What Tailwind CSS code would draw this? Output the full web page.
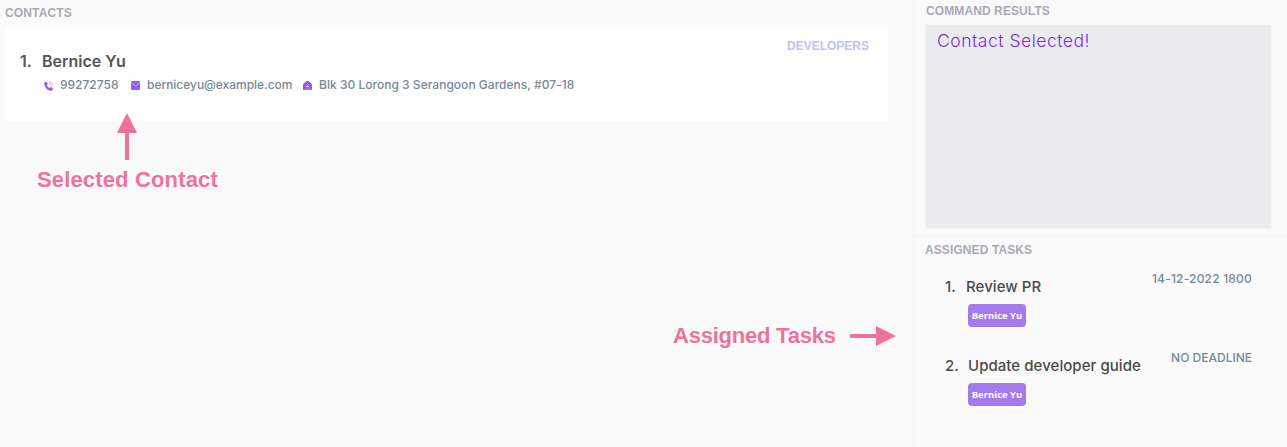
<!DOCTYPE html>
<html lang="en">
<head>
<meta charset="utf-8">
<title>Contacts</title>
<script src="https://cdn.jsdelivr.net/npm/@tailwindcss/browser@4"></script>
</head>
<body class="h-[447px] overflow-hidden bg-[#fafafa] font-['Inter',sans-serif] text-[#4a4a4a]">
<div class="flex h-[447px] w-[1287px]">
  <main class="relative w-[913px] shrink-0 pl-[5px]">
    <h2 class="h-[26px] pt-[5px] font-['Liberation_Sans',sans-serif] text-[12px] leading-4 font-bold tracking-[0.15px] text-[#a9a9b2]">CONTACTS</h2>
    <section class="flex h-[95px] w-[883px] justify-between bg-white pr-[19px] pl-[15px]">
      <div class="pt-[25px]">
        <h3 class="flex text-[16px] leading-5 font-semibold text-[#555]"><span class="w-[22px]">1.</span><span>Bernice Yu</span></h3>
        <div class="mt-[6px] flex h-4 items-center pl-[23px] text-[12px] leading-4 font-medium whitespace-nowrap text-[#778899]">
          <svg class="mt-px mr-[6px] ml-px size-[10px]" viewBox="0 0 10 10" fill="#945df2"><path d="M.5 1h2.300l1 2-1 1.200c.5 1.200 1.500 2.200 2.700 2.800L6.600 6l2.200 1v2L7.500 9.800C3.500 9.800.3 6 .2 2z"/><path d="M5 .8c2.300 0 4 1.800 4 4.200M5 2.700c1.300 0 2.200.9 2.200 2.300" fill="none" stroke="#b18bf6" stroke-width=".8" stroke-dasharray="1.500 .5"/></svg>
          <span class="w-[71px]">99272758</span>
          <svg class="mt-px mr-[7px] h-[9px] w-[9px]" viewBox="0 0 9 9"><rect width="9" height="9" rx="1.200" fill="#945df2"/><path d="M.3 1.500 4.500 5.200 8.700 1.500" fill="none" stroke="#dccbfb" stroke-width=".8"/></svg>
          <span class="w-[156px] tracking-[-0.03px]">berniceyu@example.com</span>
          <svg class="mr-[7px] h-[9px] w-[9px]" viewBox="0 0 9 9"><path d="M3.500 0h2L8.200 2.300 9 4v5H0V4l.8-1.700z" fill="#945df2"/><path d="M3 5.500h3M4.500 4.200v1.300" stroke="#eadfff" stroke-width=".9"/><path d="M2.500 7.300V9M4.500 7.300V9M6.500 7.300V9" stroke="#b18bf6" stroke-width=".8"/></svg>
          <span class="tracking-[0.02px]">Blk 30 Lorong 3 Serangoon Gardens, #07-18</span>
        </div>
      </div>
      <div class="pt-[12px] font-['Liberation_Sans',sans-serif] text-[12px] leading-4 font-bold text-[#c0c0fd]">DEVELOPERS</div>
    </section>
    <div class="absolute top-[113px] left-[37px] w-[182px] text-[#ef719f]">
      <svg class="ml-[80px] h-[47px] w-5" viewBox="0 0 20 47" fill="currentColor"><path d="M10 0 20 20h-8v27H8V20H0z"/></svg>
      <p class="mt-[6px] font-['Liberation_Sans',sans-serif] text-[22px] leading-7 font-bold tracking-[0.15px] whitespace-nowrap">Selected Contact</p>
    </div>
    <div class="absolute top-[322px] left-[673px] flex items-center text-[#ef719f]">
      <p class="w-[177px] font-['Liberation_Sans',sans-serif] text-[22px] leading-7 font-bold tracking-[-0.23px] whitespace-nowrap">Assigned Tasks</p>
      <svg class="h-5 w-[46px]" viewBox="0 0 46 20" fill="currentColor"><path d="M46 10 26 20v-8H0V8h26V0z"/></svg>
    </div>
  </main>
  <aside class="w-[374px] border-l border-[#f4f4f5]">
    <section class="h-[236px] border-b border-[#f4f4f5] pl-[11px]">
      <h2 class="h-[24px] pt-[3px] pl-px font-['Liberation_Sans',sans-serif] text-[12px] leading-4 font-bold tracking-[0.1px] text-[#a9a9b2]">COMMAND RESULTS</h2>
      <div class="h-[205px] w-[347px] border border-[#f4f4f6] bg-[#ebebed] pt-[6px] pl-[11px] text-[17.500px] leading-5 font-light tracking-[0.52px] text-[#7a2be8]">Contact Selected!</div>
    </section>
    <section class="pr-[35px] pl-[11px]">
      <h2 class="h-[36px] pt-[6px] font-['Liberation_Sans',sans-serif] text-[12px] leading-4 font-bold tracking-[0.1px] text-[#a9a9b2]">ASSIGNED TASKS</h2>
      <article class="flex h-[79px] justify-between pl-[20px]">
        <div class="pt-[5px]"><h3 class="flex text-[15px] leading-5 font-medium"><span class="w-[21px]">1.</span><span class="tracking-[0.05px]">Review PR</span></h3>
          <span class="mt-[7px] ml-[23px] flex h-[23px] w-[58px] items-center justify-center rounded-[4px] bg-[#a57aec] pt-px font-['Open_Sans',sans-serif] text-[9.500px] font-bold whitespace-nowrap text-white">Bernice Yu</span></div>
        <p class="-mt-px text-[12px] leading-4 font-medium tracking-[0.2px] text-[#778899]">14-12-2022 1800</p>
      </article>
      <article class="flex h-[79px] justify-between pl-[20px]">
        <div class="pt-[5px]"><h3 class="flex text-[15px] leading-5 font-medium"><span class="w-[23px]">2.</span><span class="tracking-[0.05px]">Update developer guide</span></h3>
          <span class="mt-[7px] ml-[23px] flex h-[23px] w-[58px] items-center justify-center rounded-[4px] bg-[#a57aec] pt-px font-['Open_Sans',sans-serif] text-[9.500px] font-bold whitespace-nowrap text-white">Bernice Yu</span></div>
        <p class="-mt-px text-[12px] leading-4 font-medium text-[#778899]">NO DEADLINE</p>
      </article>
    </section>
  </aside>
</div>
</body>
</html>
